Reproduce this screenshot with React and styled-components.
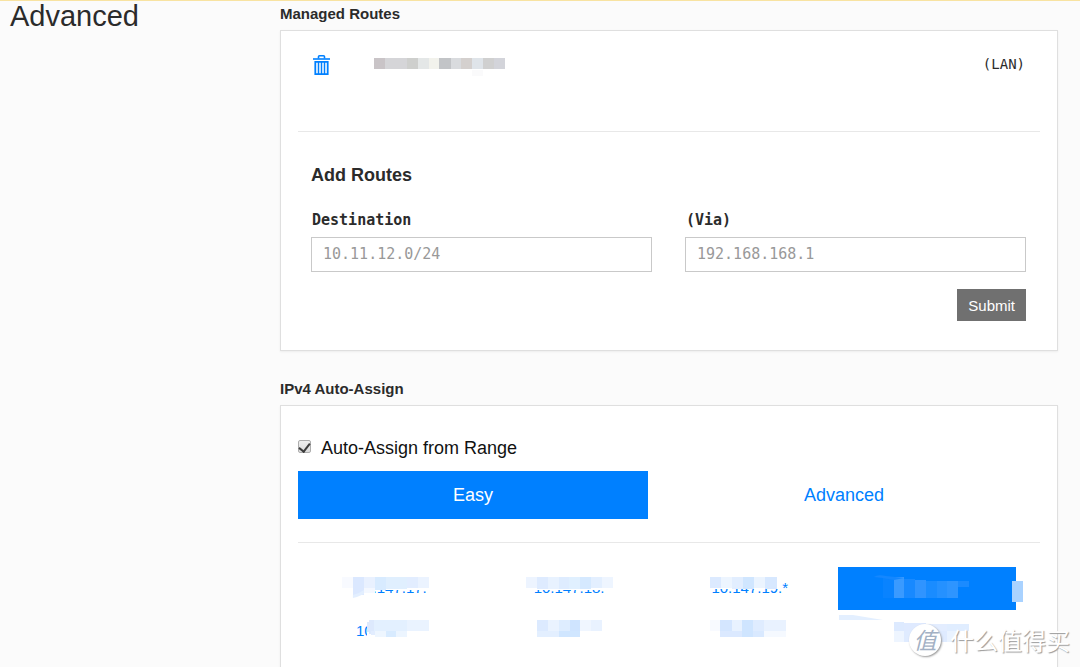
import React, { useState } from 'react'
import styled, { createGlobalStyle } from 'styled-components'

// [x, y, width, height, colour]
const routeBlocks = [
  [0, 0, 11, 11, '#c9c4c7'],
  [11, 0, 22, 11, '#d5d5d8'],
  [33, 0, 11, 11, '#cecfcd'],
  [44, 0, 11, 11, '#e4e7e7'],
  [55, 0, 10, 11, '#f2f2ec'],
  [65, 0, 12, 11, '#c2c4c7'],
  [77, 0, 10, 11, '#d9dbde'],
  [87, 0, 11, 11, '#d4d0ce'],
  [98, 0, 11, 11, '#dfe4e9'],
  [98, 12, 11, 6, '#fafafb'],
  [109, 0, 11, 11, '#d0d0d0'],
  [120, 0, 11, 11, '#d3d4da'],
]

const ranges = [
  {
    name: 'Range 1',
    text: '10.147.17.',
    blocks: [
      [37, 9, 90, 14, '#fff'],
      [37, 20, 30, 12, '#fff'],
      [37, 10, 11, 11, '#f8faff'],
      [48, 10, 11, 18, '#dbe8ff'],
      [59, 10, 11, 11, '#e9f1ff'],
      [59, 21, 11, 5, '#f4f8ff'],
      [70, 10, 11, 13, '#d8ebff'],
      [81, 10, 21, 12, '#e0effe'],
      [102, 10, 11, 11, '#e2edff'],
      [113, 10, 11, 11, '#ebf3ff'],
    ],
    wedge: 'M48 31V28L54 26L59 23V27L52 30Z',
  },
  {
    name: 'Range 2',
    text: '10.147.18.',
    blocks: [
      [43, 9, 90, 14, '#fff'],
      [43, 10, 11, 11, '#edf4ff'],
      [54, 10, 11, 12, '#deebff'],
      [65, 10, 11, 12, '#e8f2ff'],
      [76, 10, 10, 12, '#deecff'],
      [86, 10, 11, 12, '#e0f0ff'],
      [97, 10, 11, 12, '#d5e9ff'],
      [108, 10, 11, 11, '#e3efff'],
      [119, 10, 11, 11, '#eef5ff'],
    ],
  },
  {
    name: 'Range 3',
    text: '10.147.19.*',
    blocks: [
      [49, 9, 69, 13, '#fff'],
      [49, 10, 11, 11, '#dceaff'],
      [60, 10, 11, 11, '#edf5ff'],
      [71, 10, 11, 12, '#e2eeff'],
      [82, 10, 11, 12, '#d0e6ff'],
      [93, 10, 11, 11, '#ebf4ff'],
      [104, 10, 12, 12, '#d7e8ff'],
    ],
  },
  {
    name: 'Range 4',
    active: true,
    blocks: [
      [45, 10, 11, 21, '#0983ff'],
      [56, 10, 10, 21, '#3a9aff'],
      [66, 12, 11, 19, '#1889ff'],
      [77, 13, 11, 18, '#3094ff'],
      [88, 14, 11, 17, '#1a8cff'],
      [99, 14, 10, 17, '#2591ff'],
      [109, 14, 11, 17, '#2e95ff'],
      [120, 14, 11, 6, '#1b8bff'],
      [174, 14, 11, 21, '#a9d2ff'],
    ],
    wedge: 'M36 10Q40 7 48 9L66 11L56 13L45 11Z',
  },
  {
    name: 'Range 5',
    text: '10',
    blocks: [
      [62, 9, 60, 20, '#fff'],
      [64, 10, 6, 14, '#dde9fd'],
      [62, 12, 2, 10, '#dde9fd'],
      [69, 10, 33, 11, '#e3f0ff'],
      [102, 10, 22, 11, '#eaf3ff'],
      [66, 21, 4, 4, '#e2edff'],
      [70, 21, 11, 6, '#eef6ff'],
      [81, 21, 10, 6, '#d8ebff'],
      [91, 21, 11, 6, '#ecf5ff'],
    ],
  },
  {
    name: 'Range 6',
    blocks: [
      [54, 10, 11, 11, '#dceaff'],
      [65, 10, 11, 11, '#eaf3ff'],
      [76, 10, 11, 11, '#deedff'],
      [87, 10, 10, 11, '#cfe4ff'],
      [97, 10, 11, 11, '#f0f6ff'],
      [108, 10, 11, 11, '#e9f2ff'],
      [54, 21, 22, 6, '#e3efff'],
      [76, 21, 21, 6, '#d0e6ff'],
    ],
  },
  {
    name: 'Range 7',
    blocks: [
      [49, 10, 10, 11, '#f8faff'],
      [59, 10, 12, 11, '#d4e6ff'],
      [71, 10, 10, 11, '#e8f2ff'],
      [81, 10, 11, 11, '#cfe5ff'],
      [92, 10, 11, 11, '#dfecff'],
      [103, 10, 22, 11, '#e9f2ff'],
      [59, 21, 22, 6, '#dbe9ff'],
      [81, 21, 11, 6, '#cfe5ff'],
      [92, 21, 11, 6, '#d9e9ff'],
      [103, 21, 22, 6, '#f5f9ff'],
    ],
  },
  {
    name: 'Range 8',
    blocks: [
      [56, 12, 10, 9, '#ddeaff'],
      [66, 13, 22, 8, '#dfeaff'],
      [88, 14, 21, 7, '#e3edff'],
      [109, 14, 22, 7, '#e0edff'],
      [56, 21, 10, 11, '#eef5ff'],
      [66, 21, 43, 11, '#dfebff'],
      [109, 21, 11, 11, '#eaf3ff'],
    ],
    wedge: 'M1 5H15L45 10H1Z',
  },
]

function Blocks({ cells, wedge, color }) {
  return (
    <>
      {cells.map(([x, y, w, h, fill]) => (
        <rect key={x + '-' + y + '-' + w} x={x} y={y} width={w} height={h} fill={fill} shapeRendering="crispEdges" />
      ))}
      {wedge && <path d={wedge} fill={color} />}
    </>
  )
}

function TrashIcon() {
  return (
    <svg width="17" height="20" viewBox="0 0 17 20" fill="none" stroke="#0080ff" aria-hidden="true">
      <path d="M5.5 3.5V1.8Q5.5 .8 6.5 .8H10.5Q11.5 .8 11.5 1.8V3.5" strokeWidth="1.6" />
      <path d="M0 4H17" strokeWidth="1.6" />
      <path d="M2.3 6.8H14.7V19.2H2.3Z" strokeWidth="1.8" />
      <path d="M5.5 7V19M8.5 7V19M11.5 7V19" strokeWidth="1.5" />
    </svg>
  )
}

export default function App() {
  const [tab, setTab] = useState('easy')

  return (
    <Page>
      <GlobalStyle />
      <Title>Advanced</Title>
      <Main>
        <Heading>Managed Routes</Heading>
        <Card>
          <Route>
            <IconButton type="button" aria-label="Delete route">
              <TrashIcon />
            </IconButton>
            <svg width="131" height="18" viewBox="0 0 131 18" aria-hidden="true">
              <Blocks cells={routeBlocks} />
            </svg>
            <Via>(LAN)</Via>
          </Route>
          <Divider />
          <Form onSubmit={(e) => e.preventDefault()}>
            <FormTitle>Add Routes</FormTitle>
            <Fields>
              <Field>
                <Label htmlFor="destination">Destination</Label>
                <Input id="destination" type="text" placeholder="10.11.12.0/24" />
              </Field>
              <Field>
                <Label htmlFor="via">(Via)</Label>
                <Input id="via" type="text" placeholder="192.168.168.1" />
              </Field>
            </Fields>
            <Submit type="submit">Submit</Submit>
          </Form>
        </Card>
        <Heading>IPv4 Auto-Assign</Heading>
        <Card>
          <CheckRow>
            <Checkbox id="auto" type="checkbox" defaultChecked />
            <label htmlFor="auto">Auto-Assign from Range</label>
          </CheckRow>
          <Tabs>
            <Tab type="button" $active={tab === 'easy'} onClick={() => setTab('easy')}>Easy</Tab>
            <Tab type="button" $active={tab === 'advanced'} onClick={() => setTab('advanced')}>Advanced</Tab>
          </Tabs>
          <Divider />
          <Ranges>
            {ranges.map((range) => (
              <Range key={range.name} type="button" aria-label={range.name} $active={range.active}>
                <RangeText>{range.text}</RangeText>
                <Mosaic viewBox="0 0 178 43" aria-hidden="true">
                  <Blocks cells={range.blocks} wedge={range.wedge} color={range.active ? '#1487ff' : '#e3efff'} />
                </Mosaic>
              </Range>
            ))}
          </Ranges>
        </Card>
      </Main>
      <Watermark>
        <Badge>值</Badge>
        <span>什么值得买</span>
      </Watermark>
    </Page>
  )
}

const GlobalStyle = createGlobalStyle`
  * {
    box-sizing: border-box;
  }
  body {
    margin: 0;
    background: #fbfbfb;
    color: #2b2b2b;
    font-family: "Liberation Sans", Arial, sans-serif;
    font-size: 15px;
  }
  button, input {
    font-family: inherit;
    border-radius: 0;
  }
  button {
    cursor: pointer;
  }
`

const Page = styled.div`
  position: relative;
  display: grid;
  grid-template-columns: 280px minmax(0, 1fr);
  align-items: start;
  height: 100vh;
  overflow: hidden;
  padding-right: 22px;
  border-top: 1px solid #f8e3a1;
`

const Title = styled.h1`
  margin: 0;
  padding-left: 10px;
  font-size: 29px;
  font-weight: 400;
  line-height: 30px;
`

const Main = styled.main`
  min-width: 0;
`

const Heading = styled.h2`
  margin: 0 0 3px;
  font-size: 15px;
  line-height: 26px;
`

const Card = styled.section`
  margin-bottom: 25px;
  padding: 16px 17px 29px;
  background: #fff;
  border: 1px solid #dfdfdf;
  box-shadow: 0 1px 2px rgba(0, 0, 0, 0.06);
`

const Route = styled.div`
  display: flex;
  align-items: flex-start;
  height: 84px;
  padding: 8px 15px 0;

  > svg {
    margin: 3px 0 0 44px;
  }
`

const IconButton = styled.button`
  display: flex;
  padding: 0;
  border: 0;
  background: none;
`

const Via = styled.span`
  margin-left: auto;
  font-family: "DejaVu Sans Mono", monospace;
  font-size: 14px;
  line-height: 18px;
`

const Divider = styled.hr`
  margin: 0;
  border: 0;
  border-top: 1px solid #e8e8e8;
`

const Form = styled.form`
  display: flex;
  flex-direction: column;
  padding: 33px 14px 0 13px;
`

const FormTitle = styled.h3`
  margin: 0;
  font-size: 18px;
  line-height: 20px;
`

const Fields = styled.div`
  display: grid;
  grid-template-columns: 1fr 1fr;
  gap: 33px;
  margin: 25px 0 17px;
`

const Field = styled.div`
  display: flex;
  flex-direction: column;
  gap: 7px;
`

const Label = styled.label`
  padding-left: 1px;
  font-family: "DejaVu Sans Mono", monospace;
  font-size: 15px;
  font-weight: 700;
  line-height: 20px;
`

const Input = styled.input`
  width: 100%;
  height: 35px;
  padding: 0 11px 2px;
  border: 1px solid #c9c9c9;
  background: #fff;
  font-family: "DejaVu Sans Mono", monospace;
  font-size: 15px;

  &::placeholder {
    color: #999;
  }
`

const Submit = styled.button`
  align-self: flex-end;
  height: 32px;
  padding: 0 11px;
  border: 0;
  background: #707070;
  color: #fff;
  font-size: 15px;
`

const CheckRow = styled.div`
  display: flex;
  align-items: center;
  gap: 10px;
  padding: 16px 0 13px;
  color: #111;
  font-size: 18px;
  line-height: 20px;
`

const Checkbox = styled.input`
  appearance: none;
  display: grid;
  place-items: center;
  width: 13px;
  height: 13px;
  margin: 0 0 4px;
  border: 1px solid #adadad;
  border-radius: 2px;
  background: linear-gradient(#eee, #dcdcdc);

  &:checked::after {
    content: '';
    width: 5px;
    height: 9px;
    margin-bottom: 2px;
    border: solid #3c3c3c;
    border-width: 0 2px 2px 0;
    transform: rotate(38deg);
  }
`

const Tabs = styled.div`
  display: grid;
  grid-template-columns: 350fr 392fr;
  margin-bottom: 23px;
`

const Tab = styled.button`
  height: 48px;
  border: 0;
  background: ${(props) => (props.$active ? '#0080ff' : 'transparent')};
  color: ${(props) => (props.$active ? '#fff' : '#0080ff')};
  font-size: 18px;
`

const Ranges = styled.div`
  display: grid;
  grid-template-columns: repeat(4, 1fr);
  padding: 24px 24px 12px 7px;
`

const Range = styled.button`
  position: relative;
  display: flex;
  align-items: center;
  justify-content: center;
  height: 43px;
  padding: 0 0 2px;
  border: 0;
  background: ${(props) => (props.$active ? '#0080ff' : 'transparent')};
  color: #0080ff;
  font-size: 15px;
`

const RangeText = styled.span`
  width: 76px;
  text-align: left;
`

const Mosaic = styled.svg`
  position: absolute;
  inset: 0;
  width: 100%;
  height: 100%;
  overflow: visible;
`

const Watermark = styled.div`
  position: absolute;
  right: 10px;
  bottom: 11px;
  display: flex;
  align-items: center;
  gap: 9px;
  color: #fff;
  font-family: "Noto Sans CJK SC", sans-serif;
  font-size: 24px;
  line-height: 32px;
  text-shadow: 1px 1px 1px #999;
  pointer-events: none;
`

const Badge = styled.span`
  width: 32px;
  height: 32px;
  border-radius: 50%;
  background: #fff;
  box-shadow: 1px 1px 2px #999;
  color: #a3b1c4;
  font-size: 23px;
  font-style: italic;
  line-height: 30px;
  text-align: center;
  text-shadow: none;
`
